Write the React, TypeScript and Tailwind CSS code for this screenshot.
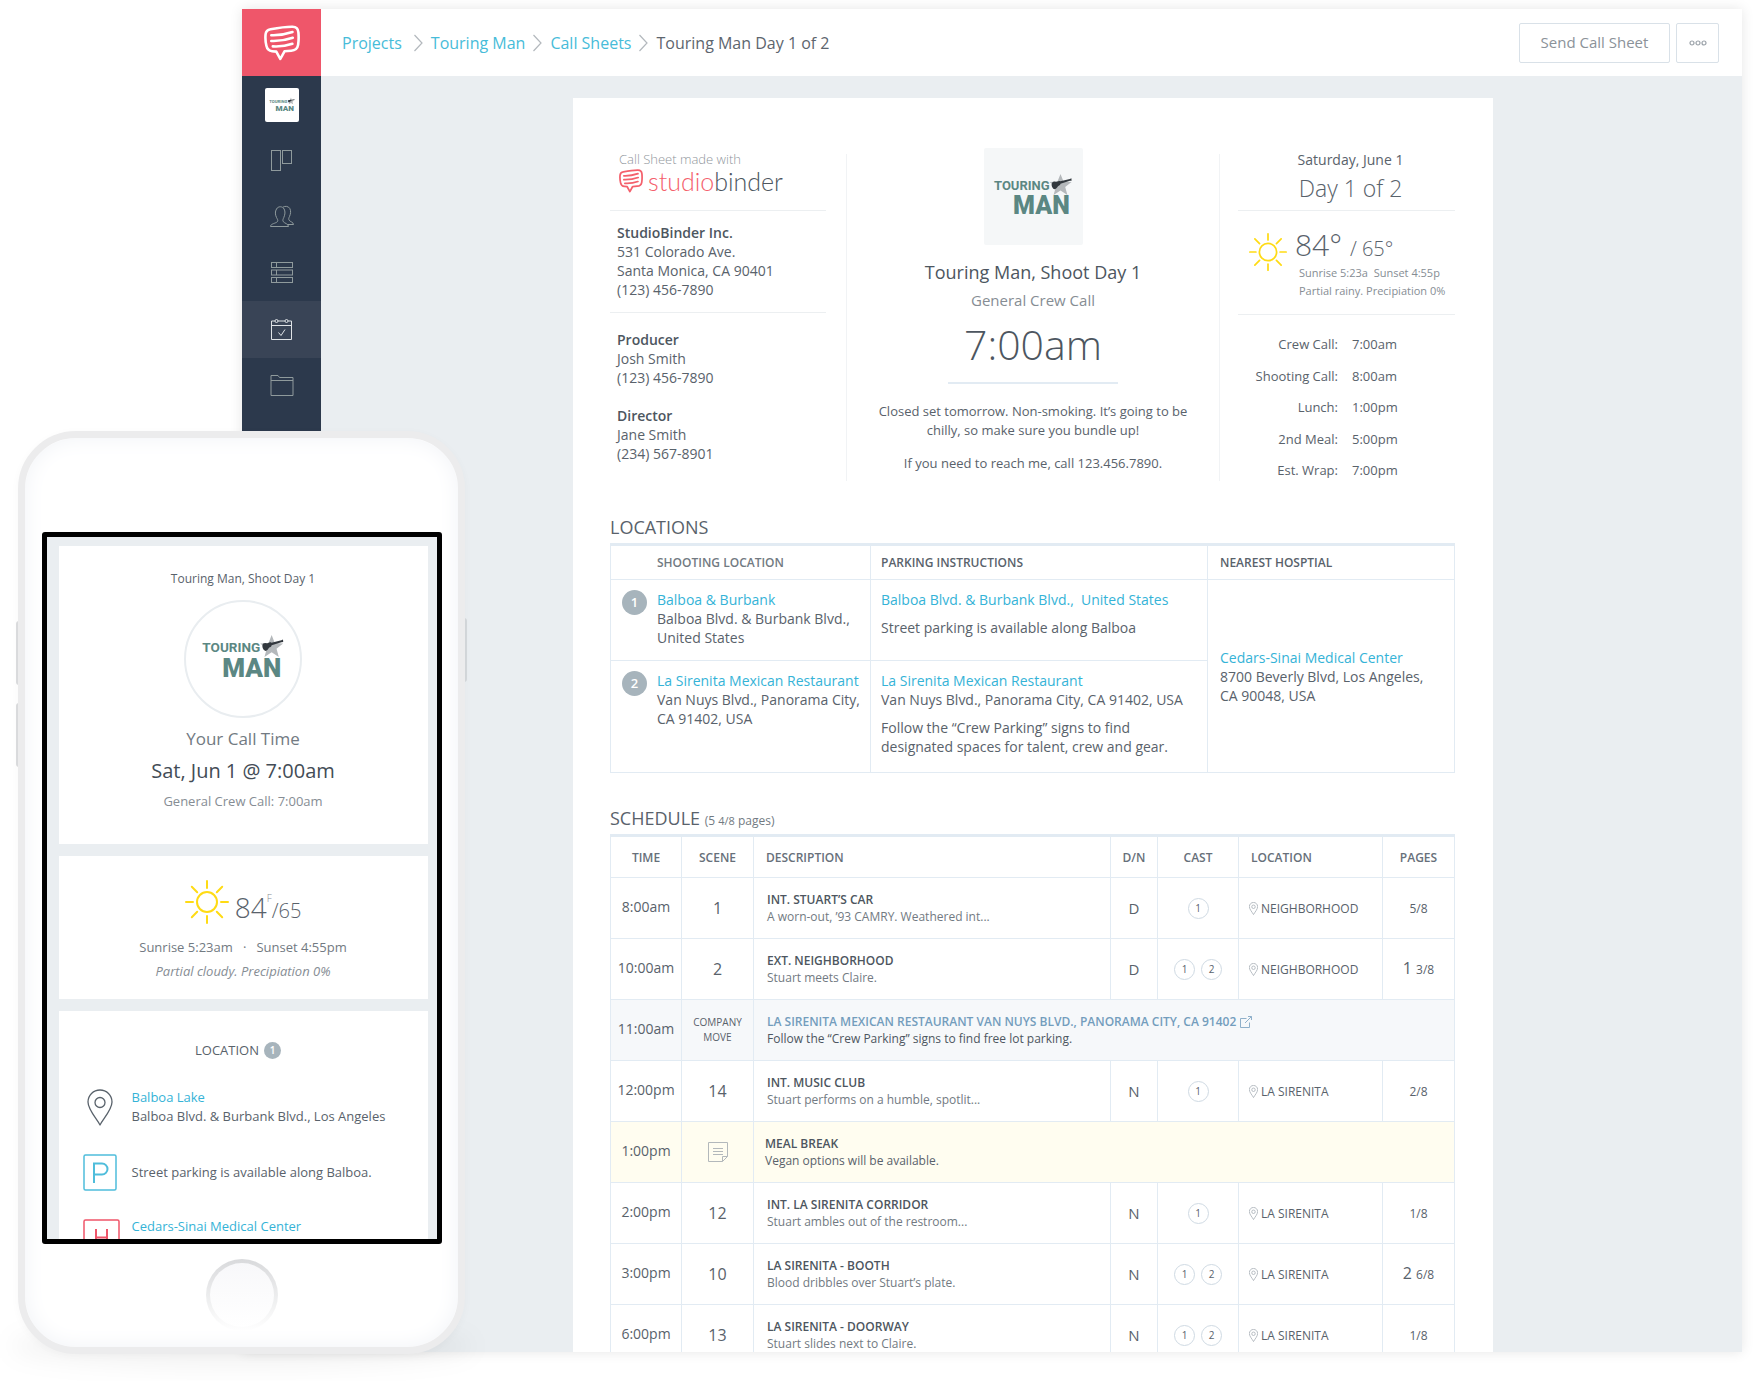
import React from "react";

function SpeechLogo({ className, weight = 2.6 }: { className: string; weight?: number }) {
  return (
    <svg viewBox="0 0 36 36" className={className} fill="none" stroke="currentColor" strokeWidth={weight} strokeLinecap="round" strokeLinejoin="round" aria-hidden="true">
      <path d="M6.5 4.2C13 3 22 1.6 28.5 1.7c3.8 0 5.6 2 5.9 5.6.4 4.4.3 8.800-.3 12.600-.6 3.700-2.900 5.600-6.900 5.900l-6.700.5-4.200 7.700-4-7.400-4.300-.4c-3.200-.3-4.900-2.200-5.600-5.400C1.500 17 1.200 12.800 1.600 9.200c.3-2.900 1.900-4.500 4.900-5z" />
      <path d="M7.300 10.200c7 .3 14.600-1 21.200-3.200" />
      <path d="M7.300 16c7.300.3 14.700-.8 21.500-3.200" />
      <path d="M8.800 21.400c6.800.4 13.500-.5 19.600-2.600" />
    </svg>
  );
}

function TouringLogo({ className }: { className: string }) {
  return (
    <svg viewBox="0 0 80 48" className={className} role="img" aria-label="Touring Man">
      <path d="M67.500 1l3 7.600 8 .5-6.300 5 2.200 7.900-6.900-4.500-6.900 4.500 2.200-7.900-6.300-5 8-.5z" fill="#b4b8bb" />
      <path d="M59.500 9.200c1.500-1.300 3-.2 4.200-.4 1.300-.3 2.300-1.200 3.600-.5l9.600-2.300 1.500-.7.200 2.400-1.700.1-9.400 2.900c-.2 1.600-1.500 1.700-2.500 2.600-1 1-1.500 2.900-3.300 2.900-2.300 0-4.300-4.900-2.200-7z" fill="#32383e" />
      <text x="1" y="17" className="fill-[#5b8783] font-['Roboto',sans-serif] text-[13px] font-bold">TOURING</text>
      <text x="20" y="41" className="fill-[#5b8783] font-['Roboto',sans-serif] text-[25px] font-black">MAN</text>
    </svg>
  );
}

function Sun({ className }: { className: string }) {
  return (
    <svg viewBox="0 0 44 44" className={className} fill="none" stroke="#ffdb14" strokeWidth="2" strokeLinecap="round" aria-hidden="true">
      <circle cx="22" cy="22" r="10" />
      <path d="M22 1v7M22 36v7M1 22h7M36 22h7M6.800 6.800l5.400 5.400M31.800 31.800l5.400 5.400M37.200 6.800l-5.400 5.400M12.200 31.800l-5.400 5.400" />
    </svg>
  );
}

function Pin({ className, weight = 1 }: { className: string; weight?: number }) {
  return (
    <svg viewBox="0 0 26 37" className={className} fill="none" stroke="currentColor" strokeWidth={weight} strokeLinejoin="round" aria-hidden="true">
      <path d="M13 36C9.500 29.500 1 20.500 1 13a12 12 0 0 1 24 0c0 7.500-8.500 16.500-12 23z" />
      <circle cx="13" cy="13.500" r="5" />
    </svg>
  );
}

function Chevron() {
  return (
    <svg viewBox="0 0 9 18" className="h-[18px] w-[9px] shrink-0" fill="none" stroke="#b3b8bd" strokeWidth="1.200" aria-hidden="true">
      <path d="M.5 1l7.500 8-7.500 8" />
    </svg>
  );
}

const navIcons: { label: string; active?: boolean; drawing: React.ReactNode }[] = [
  {
    label: "Boards",
    drawing: (
      <>
        <rect x="1.500" y="1.500" width="9" height="20" />
        <rect x="12.500" y="1.500" width="9" height="13" />
      </>
    ),
  },
  {
    label: "Contacts",
    drawing: (
      <>
        <path d="M.5 21.500c0-3 5.500-3 7-5 .8-1.200-.2-2.500-1-4-1.500-3-1.500-6 0-8.500 1.600-3 6-3 7.600 0 1.400 2.500 1 5.500-.3 8.500-.7 1.500-1.300 2.800-.6 4 1.300 2 5.300 2.200 5.300 5z" />
        <path d="M13 2.200c2-1.500 5.600-1 6.800 1.300 1.300 2.500.9 5.300-.3 8-.7 1.500-1.100 2.500-.4 3.700 1 1.600 4.400 2 4.400 4.300h-5.800" />
      </>
    ),
  },
  {
    label: "Breakdowns",
    drawing: (
      <>
        <rect x="1.500" y="1.500" width="21" height="5" />
        <rect x="1.500" y="9" width="21" height="5" />
        <rect x="1.500" y="16.500" width="21" height="5" />
        <path d="M6.500 1.500v5M6.500 9v5M6.500 16.500v5" />
      </>
    ),
  },
  {
    label: "Call sheets",
    active: true,
    drawing: (
      <>
        <path d="M5 3H1.500v18.500h20V3H18M8 3h7M1.500 7.500h20M8.500 14.500l2.500 3 4-6" />
        <circle cx="6.500" cy="3" r="1.500" />
        <circle cx="16.500" cy="3" r="1.500" />
      </>
    ),
  },
  {
    label: "Files",
    drawing: (
      <>
        <path d="M1 21.500v-20h7l1.500 2h13.500v18z" />
        <path d="M1 6.500h22" />
      </>
    ),
  },
];

function Sidebar() {
  return (
    <nav className="flex w-[79px] shrink-0 flex-col bg-[#2c394c]">
      <a href="#home" aria-label="StudioBinder" className="flex h-[67px] items-center justify-center bg-[#ef566a] text-white">
        <SpeechLogo className="h-9 w-9" />
      </a>
      <a href="#project" className="flex h-[57px] items-center justify-center">
        <span className="flex h-[34px] w-[34px] items-center justify-center rounded-xs bg-white">
          <TouringLogo className="h-4 w-[26px]" />
        </span>
      </a>
      {navIcons.map((item) => (
        <a
          key={item.label}
          href="#nav"
          aria-label={item.label}
          className={item.active ? "flex h-[57px] items-center justify-center bg-[#394456] text-[#dfe3e6]" : "flex h-14 items-center justify-center text-[#8f9a9c]"}
        >
          <svg viewBox="0 0 24 24" className="h-6 w-6" fill="none" stroke="currentColor" strokeWidth="1" aria-hidden="true">
            {item.drawing}
          </svg>
        </a>
      ))}
    </nav>
  );
}

function TopBar() {
  return (
    <header className="flex h-[67px] shrink-0 items-center justify-between bg-white pr-[23px] pl-[21px]">
      <nav aria-label="Breadcrumb" className="flex items-center gap-2 text-base text-[#47bcd9]">
        <a href="#projects" className="mr-1">Projects</a>
        <Chevron />
        <a href="#touring-man">Touring Man</a>
        <Chevron />
        <a href="#call-sheets">Call Sheets</a>
        <Chevron />
        <span className="text-[#5d656e]">Touring Man Day 1 of 2</span>
      </nav>
      <div className="flex gap-[6px]">
        <button type="button" className="h-10 w-[151px] rounded-xs border border-[#d9e1e8] text-[15px] text-[#8b9299]">Send Call Sheet</button>
        <button type="button" aria-label="More" className="flex h-10 w-[43px] items-center justify-center rounded-xs border border-[#d9e1e8]">
          <svg viewBox="0 0 18 6" className="h-[6px] w-[18px]" fill="none" stroke="#9aa1a8" strokeWidth="1.200" aria-hidden="true">
            <circle cx="3" cy="3" r="2" />
            <circle cx="9" cy="3" r="2" />
            <circle cx="15" cy="3" r="2" />
          </svg>
        </button>
      </div>
    </header>
  );
}

const callTimes = [
  ["Crew Call:", "7:00am"],
  ["Shooting Call:", "8:00am"],
  ["Lunch:", "1:00pm"],
  ["2nd Meal:", "5:00pm"],
  ["Est. Wrap:", "7:00pm"],
];

function SheetHead() {
  return (
    <section className="grid grid-cols-[236px_1fr_235px] text-[14px] leading-[19px] text-[#59626b]">
      <div className="pr-5">
        <div className="border-b border-[#eceff1] pb-3 pl-[9px]">
          <p className="text-[13px] leading-[10px] font-light text-[#8f959b]">Call Sheet made with</p>
          <p className="flex h-[34px] items-center gap-[5px] font-['Lato',sans-serif] text-[25px] leading-8 font-light text-[#4d5660]">
            <SpeechLogo className="h-6 w-6 text-[#f4606c]" />
            <span>
              <span className="text-[#f4606c]">studio</span>binder
            </span>
          </p>
        </div>
        <address className="border-b border-[#eceff1] pt-3 pb-[13px] pl-[7px] not-italic">
          <strong className="font-semibold text-[#4d5660]">StudioBinder Inc.</strong>
          <br />
          531 Colorado Ave.
          <br />
          Santa Monica, CA 90401
          <br />
          (123) 456-7890
        </address>
        <p className="pt-[17px] pl-[7px]">
          <strong className="font-semibold text-[#4d5660]">Producer</strong>
          <br />
          Josh Smith
          <br />
          (123) 456-7890
        </p>
        <p className="pt-[19px] pl-[7px]">
          <strong className="font-semibold text-[#4d5660]">Director</strong>
          <br />
          Jane Smith
          <br />
          (234) 567-8901
        </p>
      </div>

      <div className="flex flex-col items-center border-x border-[#f1f3f5] px-2 pb-2 text-center">
        <div className="-mt-[6px] flex h-[97px] w-[99px] items-center justify-center rounded-xs bg-[#f5f7f8]">
          <TouringLogo className="h-12 w-20" />
        </div>
        <h1 className="mt-[15px] text-[18px] leading-6 text-[#4d5660]">Touring Man, Shoot Day 1</h1>
        <p className="mt-[6px] text-[15px] leading-5 text-[#868d94]">General Crew Call</p>
        <p className="mt-[10px] text-[41px] leading-[48px] font-light text-[#4d5660]">7:00am</p>
        <div className="mt-[14px] h-[2px] w-[170px] bg-[#e2ebf3]" />
        <p className="mt-[18px] text-[13px]">
          Closed set tomorrow. Non-smoking. It’s going to be
          <br />
          chilly, so make sure you bundle up!
        </p>
        <p className="mt-[14px] text-[13px]">If you need to reach me, call 123.456.7890.</p>
      </div>

      <div className="flex flex-col pl-[18px]">
        <div className="border-b border-[#eceff1] pb-2 pl-2 text-center">
          <p className="text-[14px] leading-[12px]">Saturday, June 1</p>
          <p className="mt-2 text-[23px] leading-7 font-light">Day 1 of 2</p>
        </div>
        <div className="flex border-b border-[#eceff1] pt-4 pb-[14px] pl-[11px]">
          <Sun className="mt-[6px] h-[38px] w-[38px] shrink-0" />
          <div className="pl-2">
            <p className="text-[30px] leading-9 font-light">
              84° <span className="text-[20px] leading-none">/ 65°</span>
            </p>
            <p className="mt-px pl-1 text-[11px] leading-[18px] whitespace-nowrap text-[#868d94]">
              Sunrise 5:23a&nbsp; Sunset 4:55p
              <br />
              Partial rainy. Precipiation 0%
            </p>
          </div>
        </div>
        <dl className="flex flex-1 flex-col justify-between pt-[19px] pb-[1px] text-[13px] leading-5">
          {callTimes.map(([label, time]) => (
            <div key={label} className="flex gap-[14px]">
              <dt className="w-[100px] text-right">{label}</dt>
              <dd>{time}</dd>
            </div>
          ))}
        </dl>
      </div>
    </section>
  );
}

function NumberBadge({ n }: { n: number }) {
  return <span className="flex h-[25px] w-[25px] shrink-0 items-center justify-center rounded-full bg-[#a7b4bc] text-[13px] font-semibold text-white">{n}</span>;
}

function Locations() {
  return (
    <section className="mt-[34px]">
      <h2 className="mb-1 text-[18px] leading-6 text-[#59626b]">LOCATIONS</h2>
      <table className="w-full table-fixed border-collapse text-[14px] leading-[19px] text-[#59626b] [&_td]:border [&_td]:border-[#e2ebf3] [&_th]:border [&_th]:border-[#e2ebf3]">
        <thead className="border-t-[3px] border-[#e2ebf3]">
          <tr className="h-[35px] text-left text-[12px]">
            <th scope="col" className="w-[260px] pl-[46px] font-semibold text-[#727a82]">SHOOTING LOCATION</th>
            <th scope="col" className="pl-[10px] font-semibold">PARKING INSTRUCTIONS</th>
            <th scope="col" className="w-[247px] pl-3 font-semibold">NEAREST HOSPTIAL</th>
          </tr>
        </thead>
        <tbody>
          <tr className="h-[81px] align-top">
            <td className="pt-[10px] pl-[11px]">
              <div className="flex gap-[10px]">
                <NumberBadge n={1} />
                <p>
                  <a href="#map" className="text-[#35b3d7]">Balboa &amp; Burbank</a>
                  <br />
                  Balboa Blvd. &amp; Burbank Blvd.,
                  <br />
                  United States
                </p>
              </div>
            </td>
            <td className="pt-[10px] pl-[10px]">
              <a href="#map" className="text-[#35b3d7]">Balboa Blvd. &amp; Burbank Blvd.,&nbsp; United States</a>
              <p className="mt-[9px]">Street parking is available along Balboa</p>
            </td>
            <td rowSpan={2} className="pl-3 align-middle">
              <a href="#map" className="text-[#35b3d7]">Cedars-Sinai Medical Center</a>
              <br />
              8700 Beverly Blvd, Los Angeles,
              <br />
              CA 90048, USA
            </td>
          </tr>
          <tr className="h-[112px] align-top">
            <td className="pt-[10px] pl-[11px]">
              <div className="flex gap-[10px]">
                <NumberBadge n={2} />
                <p>
                  <a href="#map" className="text-[#35b3d7]">La Sirenita Mexican Restaurant</a>
                  <br />
                  Van Nuys Blvd., Panorama City,
                  <br />
                  CA 91402, USA
                </p>
              </div>
            </td>
            <td className="pt-[10px] pl-[10px]">
              <a href="#map" className="text-[#35b3d7]">La Sirenita Mexican Restaurant</a>
              <br />
              Van Nuys Blvd., Panorama City, CA 91402, USA
              <p className="mt-[9px]">
                Follow the “Crew Parking” signs to find
                <br />
                designated spaces for talent, crew and gear.
              </p>
            </td>
          </tr>
        </tbody>
      </table>
    </section>
  );
}

type Scene = {
  kind: "scene";
  time: string;
  scene: string;
  title: string;
  text: string;
  dn: string;
  cast: number[];
  place: string;
  whole?: string;
  part: string;
};
type Move = { kind: "move"; time: string; title: string; text: string };
type Break = { kind: "break"; time: string; title: string; text: string };

const rows: (Scene | Move | Break)[] = [
  { kind: "scene", time: "8:00am", scene: "1", title: "INT. STUART’S CAR", text: "A worn-out, ’93 CAMRY. Weathered int...", dn: "D", cast: [1], place: "NEIGHBORHOOD", part: "5/8" },
  { kind: "scene", time: "10:00am", scene: "2", title: "EXT. NEIGHBORHOOD", text: "Stuart meets Claire.", dn: "D", cast: [1, 2], place: "NEIGHBORHOOD", whole: "1", part: "3/8" },
  { kind: "move", time: "11:00am", title: "LA SIRENITA MEXICAN RESTAURANT VAN NUYS BLVD., PANORAMA CITY, CA 91402", text: "Follow the “Crew Parking” signs to find free lot parking." },
  { kind: "scene", time: "12:00pm", scene: "14", title: "INT. MUSIC CLUB", text: "Stuart performs on a humble, spotlit...", dn: "N", cast: [1], place: "LA SIRENITA", part: "2/8" },
  { kind: "break", time: "1:00pm", title: "MEAL BREAK", text: "Vegan options will be available." },
  { kind: "scene", time: "2:00pm", scene: "12", title: "INT. LA SIRENITA CORRIDOR", text: "Stuart ambles out of the restroom...", dn: "N", cast: [1], place: "LA SIRENITA", part: "1/8" },
  { kind: "scene", time: "3:00pm", scene: "10", title: "LA SIRENITA - BOOTH", text: "Blood dribbles over Stuart’s plate.", dn: "N", cast: [1, 2], place: "LA SIRENITA", whole: "2", part: "6/8" },
  { kind: "scene", time: "6:00pm", scene: "13", title: "LA SIRENITA - DOORWAY", text: "Stuart slides next to Claire.", dn: "N", cast: [1, 2], place: "LA SIRENITA", part: "1/8" },
];

function ScheduleRow({ row }: { row: Scene | Move | Break }) {
  if (row.kind === "move") {
    return (
      <tr className="h-[61px] bg-[#f6f8fa]">
        <td className="pb-1 text-center text-[14px]">{row.time}</td>
        <td className="text-center text-[10px] leading-[15px]">
          COMPANY
          <br />
          MOVE
        </td>
        <td colSpan={5} className="pl-[13px]">
          <a href="#map" className="flex items-center gap-1 font-semibold text-[#739dbd]">
            {row.title}
            <svg viewBox="0 0 12 12" className="h-3 w-3" fill="none" stroke="#8fb0ca" strokeWidth="1" aria-hidden="true">
              <path d="M6.500 2.500h-6v9h9v-5M5 7l6.500-6.500M8 .5h3.500V4" />
            </svg>
          </a>
          <p className="text-[#4d5660]">{row.text}</p>
        </td>
      </tr>
    );
  }
  if (row.kind === "break") {
    return (
      <tr className="h-[61px] bg-[#fffdf0]">
        <td className="pb-1 text-center text-[14px]">{row.time}</td>
        <td>
          <svg viewBox="0 0 20 20" className="mx-auto h-5 w-5" fill="none" stroke="#b3b8bb" strokeWidth="1" role="img" aria-label="Note">
            <path d="M.5.500h19v14l-5 5H.5zM19.500 14.500h-5v5M5 6.500h10M5 9.500h10M5 12.500h10" />
          </svg>
        </td>
        <td colSpan={5} className="pl-[11px]">
          <p className="font-semibold text-[#4d5660]">{row.title}</p>
          <p>{row.text}</p>
        </td>
      </tr>
    );
  }
  return (
    <tr className="h-[61px]">
      <td className="pb-1 text-center text-[14px]">{row.time}</td>
      <td className="text-center text-[16px]">{row.scene}</td>
      <td className="pl-[13px]">
        <p className="font-semibold text-[#4d5660]">{row.title}</p>
        <p className="text-[#727a82]">{row.text}</p>
      </td>
      <td className="text-center text-[15px]">{row.dn}</td>
      <td>
        <div className="flex justify-center gap-[6px]">
          {row.cast.map((n) => (
            <span key={n} className="flex h-[21px] w-[21px] items-center justify-center rounded-full border border-[#cfdae3] text-[10px]">
              {n}
            </span>
          ))}
        </div>
      </td>
      <td className="pl-[10px]">
        <span className="flex items-center gap-[3px] text-[12px]">
          <Pin className="h-[13px] w-[9px] text-[#a9b1b8]" weight={2.4} />
          {row.place}
        </span>
      </td>
      <td className="text-center text-[12px]">
        {row.whole && <span className="text-[16px]">{row.whole} </span>}
        {row.part}
      </td>
    </tr>
  );
}

function Schedule() {
  return (
    <section className="mt-[33px]">
      <h2 className="mb-1 text-[18px] leading-6 text-[#59626b]">
        SCHEDULE{" "}
        <span className="text-[12px] leading-none text-[#727a82]">
          (5 <span className="text-[11px]">4/8</span> pages)
        </span>
      </h2>
      <table className="w-full table-fixed border-collapse text-[12px] leading-[17px] text-[#59626b] [&_td]:border [&_td]:border-[#e2ebf3] [&_th]:border [&_th]:border-[#e2ebf3]">
        <thead className="border-t-[3px] border-[#e2ebf3]">
          <tr className="h-[42px] text-[12px] text-[#67707a] [&_th]:font-semibold">
            <th scope="col" className="w-[71px]">TIME</th>
            <th scope="col" className="w-[72px]">SCENE</th>
            <th scope="col" className="pl-3 text-left">DESCRIPTION</th>
            <th scope="col" className="w-[47px]">D/N</th>
            <th scope="col" className="w-[81px]">CAST</th>
            <th scope="col" className="w-[144px] pl-3 text-left">LOCATION</th>
            <th scope="col" className="w-[72px]">PAGES</th>
          </tr>
        </thead>
        <tbody>
          {rows.map((row) => (
            <ScheduleRow key={row.time} row={row} />
          ))}
        </tbody>
      </table>
    </section>
  );
}

function Phone() {
  return (
    <aside className="absolute top-[431px] left-[18px] w-[447px]">
      <div className="absolute -inset-x-2 -bottom-3 h-10 rounded-[50%] bg-black/5 blur-md" />
      <div className="absolute top-[190px] -left-[2px] h-16 w-[3px] rounded-l-sm bg-[#dcdddf]" />
      <div className="absolute top-[272px] -left-[2px] h-16 w-[3px] rounded-l-sm bg-[#dcdddf]" />
      <div className="absolute top-[187px] -right-[2px] h-16 w-[3px] rounded-r-sm bg-[#d4d8db]" />
      <div className="relative flex h-[923px] flex-col items-center rounded-[58px] border-7 border-[#ececed] bg-white pt-[94px] shadow-[0_2px_8px_rgba(0,0,0,0.03),inset_0_0_22px_#f1f3f7]">
        <div className="h-[712px] w-[400px] shrink-0 overflow-hidden rounded-[3px] border-[5px] border-black bg-[#eaeef1]">
          <div className="flex flex-col gap-3 pt-[9px] pr-[9px] pl-3 text-[13px] leading-[19px] text-[#59626b]">
            <section className="flex h-[298px] flex-col items-center bg-white pt-6">
              <p className="text-[12px] leading-[18px]">Touring Man, Shoot Day 1</p>
              <div className="mt-[12px] flex h-[118px] w-[118px] items-center justify-center rounded-full border-2 border-[#e9edf0]">
                <TouringLogo className="h-[50px] w-[84px]" />
              </div>
              <p className="mt-[9px] text-[17px] leading-6 text-[#727a82]">Your Call Time</p>
              <p className="mt-2 text-[20px] leading-6 text-[#434c56]">Sat, Jun 1 @ 7:00am</p>
              <p className="mt-2 leading-5 text-[#868d94]">General Crew Call: 7:00am</p>
            </section>
            <section className="flex h-[143px] flex-col items-center bg-white pt-6">
              <div className="flex items-start gap-[6px] font-light">
                <Sun className="h-11 w-11" />
                <p className="text-[28px] leading-[54px]">
                  84<sup className="-top-[16px] text-[10px] leading-none text-[#868d94]">F</sup>
                  <span className="text-[20px] leading-none">/65</span>
                </p>
              </div>
              <p className="mt-[3px] leading-5 text-[#727a82]">Sunrise 5:23am&nbsp;&nbsp; · &nbsp;&nbsp;Sunset 4:55pm</p>
              <p className="mt-1 leading-5 text-[#868d94] italic">Partial cloudy. Precipiation 0%</p>
            </section>
            <section className="bg-white px-6 pt-[30px]">
              <h2 className="flex items-center justify-center gap-[5px] pr-[10px]">
                LOCATION
                <span className="flex h-[17px] w-[17px] items-center justify-center rounded-full bg-[#a7b4bc] text-[10px] font-semibold text-white">1</span>
              </h2>
              <div className="mt-7 flex items-center gap-[15px]">
                <span className="flex w-[34px] justify-center">
                  <Pin className="h-[37px] w-[26px]" weight={1.3} />
                </span>
                <p>
                  <a href="#map" className="text-[#35b3d7]">Balboa Lake</a>
                  <br />
                  Balboa Blvd. &amp; Burbank Blvd., Los Angeles
                </p>
              </div>
              <div className="mt-[28px] flex items-center gap-[15px]">
                <svg viewBox="0 0 34 37" className="h-[37px] w-[34px]" fill="none" stroke="#4fbddb" strokeWidth="1.500" role="img" aria-label="Parking">
                  <rect x="1" y="1" width="32" height="35" rx="1.500" />
                  <path d="M11 29V9.500h8a5.500 5.500 0 0 1 0 11h-8" strokeWidth="2" />
                </svg>
                <p>Street parking is available along Balboa.</p>
              </div>
              <div className="mt-[26px] flex items-start gap-3">
                <svg viewBox="0 0 37 37" className="mt-[2px] h-[37px] w-[37px]" fill="none" stroke="#ef566a" strokeWidth="1.500" role="img" aria-label="Hospital">
                  <rect x="1" y="1" width="35" height="35" rx="1.500" />
                  <path d="M13 10v19M24 10v19M13 18.500h11" strokeWidth="2" />
                </svg>
                <p>
                  <a href="#map" className="text-[#35b3d7]">Cedars-Sinai Medical Center</a>
                  <br />
                  8700 Beverly Blvd, Los Angeles
                </p>
              </div>
            </section>
          </div>
        </div>
        <button type="button" aria-label="Home" className="mt-[15px] h-[72px] w-[72px] rounded-full bg-linear-to-b from-[#d9dadc] to-white p-1">
          <span className="block h-full rounded-full bg-linear-to-b from-[#f8f8fa] to-white" />
        </button>
      </div>
    </aside>
  );
}

export default function App() {
  return (
    <div className="relative h-screen min-h-[1381px] overflow-hidden bg-white pt-[9px] pr-[11px] pb-[29px] pl-[242px] font-['Open_Sans',sans-serif]">
      <div className="flex h-full shadow-[0_0_12px_rgba(0,0,0,0.1)]">
        <Sidebar />
        <div className="flex min-w-0 flex-1 flex-col">
          <TopBar />
          <main className="flex-1 overflow-hidden bg-[#eaeef1] pt-[22px] pl-[3px]">
            <article className="mx-auto max-w-[920px] bg-white pt-14 pr-[38px] pl-[37px]">
              <SheetHead />
              <Locations />
              <Schedule />
            </article>
          </main>
        </div>
      </div>
      <Phone />
    </div>
  );
}
